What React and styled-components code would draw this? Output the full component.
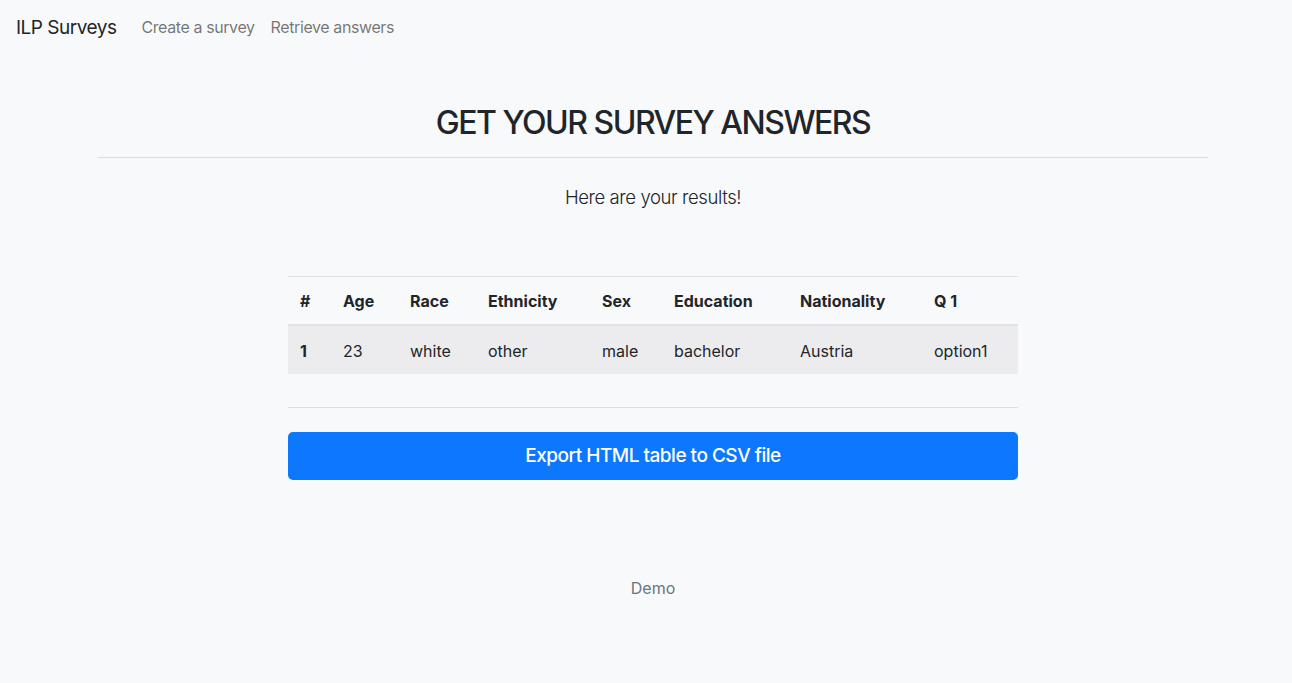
import styled, { createGlobalStyle } from "styled-components";

const GlobalStyle = createGlobalStyle`
  * { box-sizing: border-box; }
  body {
    margin: 0;
    background: #f8f9fa;
    color: #212529;
    font-family: Inter, "Noto Sans", sans-serif;
    font-size: 16px;
  }
`;

const columns = [
  { key: "id", label: "#", width: 43 },
  { key: "age", label: "Age", width: 67 },
  { key: "race", label: "Race", width: 78 },
  { key: "ethnicity", label: "Ethnicity", width: 114 },
  { key: "sex", label: "Sex", width: 72 },
  { key: "education", label: "Education", width: 126 },
  { key: "nationality", label: "Nationality", width: 134 },
  { key: "q1", label: "Q 1", width: 96 },
];

const rows = [
  {
    id: "1",
    age: "23",
    race: "white",
    ethnicity: "other",
    sex: "male",
    education: "bachelor",
    nationality: "Austria",
    q1: "option1",
  },
];

function App() {
  return (
    <Page>
      <GlobalStyle />
      <Navbar>
        <Brand href="#">ILP Surveys</Brand>
        <NavLink href="#">Create a survey</NavLink>
        <NavLink href="#">Retrieve answers</NavLink>
      </Navbar>

      <Main>
        <Title>GET YOUR SURVEY ANSWERS</Title>
        <Rule />
        <Lead>Here are your results!</Lead>

        <Narrow>
          <Table>
            <thead>
              <tr>
                {columns.map((c) => (
                  <Th key={c.key} style={{ width: c.width }}>
                    {c.label}
                  </Th>
                ))}
              </tr>
            </thead>
            <tbody>
              {rows.map((r, i) => (
                <Tr key={i} $striped={i % 2 === 0}>
                  {columns.map((c) => (
                    <Td key={c.key} $bold={c.key === "id"}>
                      {r[c.key]}
                    </Td>
                  ))}
                </Tr>
              ))}
            </tbody>
          </Table>
          <ShortRule />
          <ExportButton>Export HTML table to CSV file</ExportButton>
        </Narrow>

        <Footer>Demo</Footer>
      </Main>
    </Page>
  );
}

export default App;

const Page = styled.div`
  min-height: 683px;
`;

const Navbar = styled.nav`
  display: flex;
  align-items: center;
  height: 54px;
  padding: 0 16px;
`;

const Brand = styled.a`
  font-size: 19px;
  letter-spacing: -0.5px;
  color: #212529;
  text-decoration: none;
  margin-right: 17px;
`;

const NavLink = styled.a`
  font-size: 16px;
  letter-spacing: -0.4px;
  color: rgba(0, 0, 0, 0.55);
  text-decoration: none;
  padding: 0 8px;
`;

const Main = styled.main`
  width: 1110px;
  margin-left: 98px;
  display: flex;
  flex-direction: column;
  align-items: center;
`;

const Title = styled.h1`
  margin: 47px 0 0;
  font-size: 32px;
  font-weight: 500;
  line-height: 44px;
  letter-spacing: -1.5px;
`;

const Rule = styled.hr`
  width: 100%;
  margin: 12px 0 0;
  border: 0;
  border-top: 1px solid #dcdde0;
`;

const Lead = styled.p`
  margin: 24px 0 0;
  font-size: 18.5px;
  font-weight: 300;
  letter-spacing: -0.4px;
  line-height: 30px;
`;

const Narrow = styled.div`
  width: 730px;
  margin-top: 64px;
  display: flex;
  flex-direction: column;
`;

const Table = styled.table`
  width: 100%;
  border-collapse: collapse;
  table-layout: fixed;
  border-top: 1px solid #dee2e6;
`;

const Th = styled.th`
  text-align: left;
  font-weight: 700;
  font-size: 16px;
  padding: 13px 12px 11px;
  height: 48px;
  border-bottom: 2px solid #dee2e6;
`;

const Tr = styled.tr`
  background: ${(p) => (p.$striped ? "#ececee" : "transparent")};
`;

const Td = styled.td`
  padding: 13px 12px 11px;
  height: 49px;
  font-weight: ${(p) => (p.$bold ? 700 : 400)};
`;

const ShortRule = styled.hr`
  width: 100%;
  margin: 33px 0 0;
  border: 0;
  border-top: 1px solid #dcdde0;
`;

const ExportButton = styled.button`
  margin-top: 24px;
  height: 48px;
  width: 100%;
  border: 0;
  border-radius: 5px;
  background: #0d78fd;
  color: #fff;
  font-family: Inter, "Noto Sans", sans-serif;
  font-size: 19px;
  letter-spacing: -0.5px;
  font-weight: 500;
  cursor: pointer;
`;

const Footer = styled.footer`
  margin-top: 98px;
  font-size: 16px;
  color: #6c757d;
`;
